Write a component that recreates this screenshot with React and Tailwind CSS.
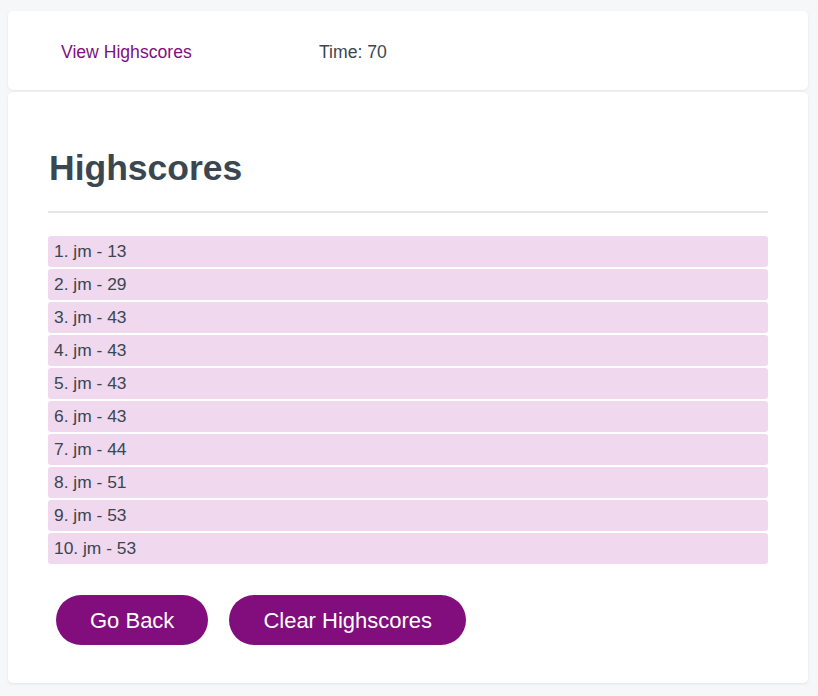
const scores = [13, 29, 43, 43, 43, 43, 44, 51, 53, 53];

export default function App() {
  return (
    <div className="min-h-[696px] bg-[#f6f7f9] pl-2 pr-[10px] pt-[11px] pb-[13px] font-['Liberation_Sans',Arial,sans-serif] text-[#3a4750]">
      {/* Header */}
      <div className="flex h-[79px] items-center rounded-[5px] bg-white pl-[53px] pt-[3px] text-[17.6px] shadow-[0_1px_3px_rgba(0,0,0,0.08)]">
        <a href="#" className="w-[258px] text-[#7f0f7e]">View Highscores</a>
        <span>Time: 70</span>
      </div>

      {/* Highscores card */}
      <div className="mt-[2px] rounded-[5px] bg-white px-10 pt-[56px] pb-[38px] shadow-[0_1px_3px_rgba(0,0,0,0.08)]">
        <h1 className="pl-[1px] text-[35.5px] font-bold leading-[41px]">Highscores</h1>
        <hr className="mt-[22px] border-0 border-t-2 border-[#e6e6e6]" />
        <ol className="mt-[23px] flex flex-col gap-[2px]">
          {scores.map((s, i) => (
            <li key={i} className="flex h-[31px] items-center rounded-[3px] bg-[#f0d8ef] pl-[6px] text-[17.4px]">
              {i + 1}. jm - {s}
            </li>
          ))}
        </ol>
        <div className="mt-[31px] flex gap-[21px] pl-2">
          <button className="h-[50px] rounded-full bg-[#810e7c] px-[34px] text-[22px] text-white">Go Back</button>
          <button className="h-[50px] rounded-full bg-[#810e7c] px-[34px] text-[22px] text-white">Clear Highscores</button>
        </div>
      </div>
    </div>
  );
}
